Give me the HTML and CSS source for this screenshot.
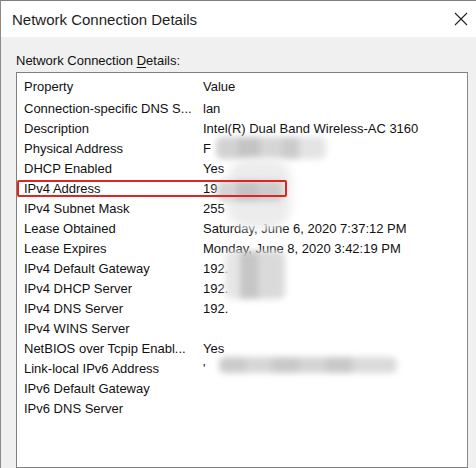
FILE: index.html
```html
<!DOCTYPE html>
<html>
<head>
<meta charset="utf-8">
<link rel="stylesheet" href="styles.css">
</head>
<body>
<div class="window">
  <div class="titlebar">
    <span class="title">Network Connection Details</span>
    <svg class="close" width="14" height="14" viewBox="0 0 14 14"><path d="M1 1 L13 13 M13 1 L1 13" stroke="#222" stroke-width="1.1" fill="none"/></svg>
  </div>
  <div class="content">
    <div class="label">Network Connection <u>D</u>etails:</div>
    <div class="listbox">
      <div class="row head"><span class="prop">Property</span><span class="val">Value</span></div>
      <div class="rows">
        <div class="row"><span class="prop">Connection-specific DNS S...</span><span class="val">lan</span></div>
        <div class="row"><span class="prop">Description</span><span class="val">Intel(R) Dual Band Wireless-AC 3160</span></div>
        <div class="row"><span class="prop">Physical Address</span><span class="val">F</span></div>
        <div class="row"><span class="prop">DHCP Enabled</span><span class="val">Yes</span></div>
        <div class="row hl"><span class="prop">IPv4 Address</span><span class="val">19</span></div>
        <div class="row"><span class="prop">IPv4 Subnet Mask</span><span class="val">255</span></div>
        <div class="row"><span class="prop">Lease Obtained</span><span class="val">Saturday, June 6, 2020 7:37:12 PM</span></div>
        <div class="row"><span class="prop">Lease Expires</span><span class="val">Monday, June 8, 2020 3:42:19 PM</span></div>
        <div class="row"><span class="prop">IPv4 Default Gateway</span><span class="val">192.</span></div>
        <div class="row"><span class="prop">IPv4 DHCP Server</span><span class="val">192.</span></div>
        <div class="row"><span class="prop">IPv4 DNS Server</span><span class="val">192.</span></div>
        <div class="row"><span class="prop">IPv4 WINS Server</span><span class="val"></span></div>
        <div class="row"><span class="prop">NetBIOS over Tcpip Enabl...</span><span class="val">Yes</span></div>
        <div class="row"><span class="prop">Link-local IPv6 Address</span><span class="val">'</span></div>
        <div class="row"><span class="prop">IPv6 Default Gateway</span><span class="val"></span></div>
        <div class="row"><span class="prop">IPv6 DNS Server</span><span class="val"></span></div>
      </div>
      <div class="blur b1"></div>
      <div class="blur b2"></div>
      <div class="blur b3"></div>
      <div class="blur b4"></div>
      <div class="blur b5"></div>
      <div class="redbox"></div>
    </div>
  </div>
</div>
</body>
</html>
```
FILE: styles.css
```css
html, body {
  margin: 0;
  padding: 0;
}
body {
  width: 476px;
  height: 468px;
  background: #f0f0f0;
  font-family: "Liberation Sans", Arial, sans-serif;
  color: #111;
  overflow: hidden;
}
.window {
  height: 467px;
  border-top: 1px solid #7d7d7d;
  border-left: 1px solid #8a8a8a;
  background: #f0f0f0;
  display: flex;
  flex-direction: column;
}
.titlebar {
  height: 36px;
  background: #fff;
  display: flex;
  align-items: center;
  justify-content: space-between;
  padding: 0 8px 0 11px;
}
.title {
  font-size: 15px;
  color: #1e1e1e;
}
.close {
  margin-top: -1px;
}
.content {
  flex: 1;
  padding: 15px 8px 0 15px;
  display: flex;
  flex-direction: column;
}
.label {
  font-size: 13px;
  height: 20px;
  line-height: 17px;
  color: #111;
}
.label u {
  text-decoration-thickness: 1px;
  text-underline-offset: 2px;
}
.listbox {
  position: relative;
  flex: 1;
  background: #fff;
  border: 1px solid #7f7f7f;
  border-right-color: #8a8a8a;
  padding-top: 4px;
}
.row {
  display: flex;
  height: 20px;
  line-height: 20px;
  font-size: 13px;
  white-space: nowrap;
}
.head {
  margin-bottom: 2px;
}
.prop {
  width: 179px;
  padding-left: 7px;
}
.val {
  flex: 1;
}
.blur {
  position: absolute;
  filter: blur(3px);
  border-radius: 6px;
}
.b1 {
  left: 199px; top: 64px; width: 110px; height: 22px;
  background: linear-gradient(90deg, #d2d2d2 0 20%, #c4c4c4 20% 40%, #d6d6d6 40% 60%, #cbcbcb 60% 75%, #e4e4e4 75% 100%);
}
.b2 {
  left: 200px; top: 108px; width: 66px; height: 20px;
  background: linear-gradient(90deg, #d4d4d4 0 30%, #c2c2c2 30% 60%, #cbcbcb 60% 100%);
}
.b3 {
  left: 210px; top: 86px; width: 64px; height: 70px;
  background: #ececec;
  filter: blur(5px);
  border-radius: 22px;
}
.b4 {
  left: 208px; top: 178px; width: 60px; height: 48px;
  background: linear-gradient(90deg, #e6e6e6 0 25%, #c6c6c6 25% 55%, #dadada 55% 100%);
}
.b5 {
  left: 202px; top: 284px; width: 178px; height: 16px;
  background: linear-gradient(90deg, #cbcbcb 0 15%, #d6d6d6 15% 30%, #c9c9c9 30% 45%, #d4d4d4 45% 60%, #c8c8c8 60% 75%, #dadada 75% 100%);
}
.b2, .b4 { z-index: 1; }
.b3 { z-index: 0; }
.redbox {
  position: absolute;
  left: 0px;
  top: 107px;
  width: 266px;
  height: 13px;
  border: 2px solid #e0241f;
  border-radius: 2px;
  z-index: 2;
}
```
